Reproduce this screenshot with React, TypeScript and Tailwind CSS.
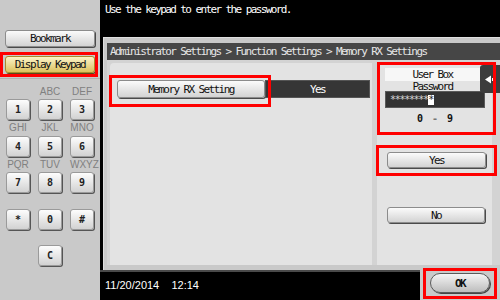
import React from "react";

const mono = "font-['DejaVu_Sans_Mono',monospace] text-[11px] tracking-[-1.6px]";

function Key({ label }: { label: string }) {
  return (
    <div className="w-[24px] h-[21px] rounded-[3px] border border-[#9a9a9a] bg-gradient-to-b from-[#fdfdfd] to-[#d2d2d2] shadow-[1px_1px_0_#555] flex items-center justify-center font-['DejaVu_Sans_Mono',monospace] font-bold text-[10px] text-[#222]">
      {label}
    </div>
  );
}

function Letters({ items, h }: { items: string[]; h: string }) {
  return (
    <div className={`flex gap-[8px] ${h} items-center`}>
      {items.map((t, i) => (
        <div key={i} className="w-[24px] text-center font-['Liberation_Sans',sans-serif] text-[10px] leading-none text-[#808080]">
          {t}
        </div>
      ))}
    </div>
  );
}

function GrayButton({ children, className = "" }: { children: React.ReactNode; className?: string }) {
  return (
    <div className={`rounded-[3px] border border-[#8c8c8c] bg-gradient-to-b from-[#fbfbfb] to-[#d3d3d3] shadow-[1px_1px_0_#4a4a4a] flex items-center justify-center text-[#111] leading-none ${mono} ${className}`}>
      {children}
    </div>
  );
}

export default function App() {
  return (
    <div className="relative w-[500px] h-[300px] flex overflow-hidden bg-black">
      {/* Left panel */}
      <div className="w-[100px] h-full bg-[#c9c9c9] flex flex-col">
        <div className="h-[79px] pt-[30px] px-[5px] border-b border-[#b2b2b2]">
          <GrayButton className="h-[17px]">Bookmark</GrayButton>
          <div className={`mt-[9px] h-[17px] rounded-[3px] border border-[#a88c2c] bg-gradient-to-b from-[#fcf4c8] to-[#dcc25c] shadow-[1px_1px_0_#5a4a1a] flex items-center justify-center text-[#111] leading-none ${mono}`}>
            Display Keypad
          </div>
        </div>
        <div className="pl-[6px] pt-[5px] flex flex-col">
          <Letters items={["", "ABC", "DEF"]} h="h-[15px]" />
          <div className="flex gap-[8px]"><Key label="1" /><Key label="2" /><Key label="3" /></div>
          <Letters items={["GHI", "JKL", "MNO"]} h="h-[16px]" />
          <div className="flex gap-[8px]"><Key label="4" /><Key label="5" /><Key label="6" /></div>
          <Letters items={["PQR", "TUV", "WXYZ"]} h="h-[15px]" />
          <div className="flex gap-[8px]"><Key label="7" /><Key label="8" /><Key label="9" /></div>
          <div className="h-[16px]" />
          <div className="flex gap-[8px]"><Key label="*" /><Key label="0" /><Key label="#" /></div>
          <div className="h-[15px]" />
          <div className="flex gap-[8px] pl-[32px]"><Key label="C" /></div>
        </div>
      </div>

      {/* Right area */}
      <div className="flex-1 flex flex-col bg-black">
        <div className={`h-[37px] pl-[5px] pt-[4px] text-white leading-[12px] ${mono}`}>
          Use the keypad to enter the password.
        </div>
        <div className="ml-[3px] h-[233px] bg-[#c9c9c9] border-t border-l border-[#dedede] pl-[3px] pt-[5px] pb-[5px] flex flex-col">
          <div className={`h-[17px] bg-[#464646] pl-[3px] flex items-center text-[#e6e6e6] leading-none ${mono}`}>
            Administrator Settings &gt; Function Settings &gt; Memory RX Settings
          </div>
          <div className="flex-1 flex bg-[#d3d3d3]">
            <div className="ml-[3px] mt-[3px] w-[262px] bg-[#e3e3e3] rounded-tl-[4px] pl-[7px] pt-[17px]">
              <div className="flex h-[18px]">
                <GrayButton className="w-[148px] h-[18px]">Memory RX Setting</GrayButton>
                <div className={`w-[105px] h-[18px] bg-[#363636] border border-[#555] flex items-center justify-center text-white leading-none ${mono}`}>
                  Yes
                </div>
              </div>
            </div>
            <div className="ml-[5px] mt-[2px] w-[115px] bg-[#e3e3e3] rounded-t-[4px] flex flex-col pl-[8px]">
              <div className={`mt-[6px] w-[95px] h-[13px] bg-[#f7f7f7] flex items-center justify-center text-[#111] leading-none ${mono}`}>
                User Box
              </div>
              <div className={`w-[95px] h-[10px] flex items-center justify-center text-[#111] leading-none ${mono}`}>
                Password
              </div>
              <div className="w-[100px] h-[17px] bg-[#333] border border-[#5a5a5a] flex items-center pl-[4px] text-[#d8d8d8] font-['DejaVu_Sans_Mono',monospace] text-[10px] tracking-[-1.3px] leading-none">
                <span>********</span>
                <span className="bg-white text-[#222] leading-[10px] px-[0.5px]">*</span>
              </div>
              <div className="mt-[6px] w-[100px] h-[10px] flex items-center justify-center gap-[9px] text-[#111] font-['DejaVu_Sans_Mono',monospace] font-bold text-[10px] leading-none">
                <span>0</span><span className="text-[#777]">-</span><span>9</span>
              </div>
              <div className="mt-[28px] ml-[2px] w-[99px]">
                <GrayButton className="h-[16px]">Yes</GrayButton>
              </div>
              <div className="mt-[39px] ml-[2px] w-[98px]">
                <GrayButton className="h-[16px]">No</GrayButton>
              </div>
            </div>
          </div>
        </div>
        <div className="flex-1 flex">
          <div className="flex-1 border-t-2 border-[#4a4a4a] bg-black pl-[5px] pt-[7px] text-white font-['Liberation_Sans',sans-serif] text-[11px] leading-[12px]">
            11/20/2014&nbsp;&nbsp;&nbsp;&nbsp;12:14
          </div>
          <div className="w-[80px] bg-[#c9c9c9] pl-[10px] pt-[3px]">
            <div className={`w-[60px] h-[20px] rounded-full border border-[#5a5a5a] bg-gradient-to-b from-[#f4f4f4] to-[#bdbdbd] shadow-[1px_1px_0_#444] flex items-center justify-center text-[#111] font-bold leading-none ${mono}`}>
              OK
            </div>
          </div>
        </div>
      </div>

      {/* Side tab */}
      <div className="absolute left-[480px] top-[65px] w-[20px] h-[28px] bg-[#3c3c3c] rounded-l-[3px] flex items-center justify-center">
        <svg width="10" height="9" viewBox="0 0 10 9">
          <polygon points="0,4.5 6,0.5 6,8.5" fill="#fff" />
          <rect x="7" y="3" width="2" height="3" fill="#fff" />
        </svg>
      </div>

      {/* Red annotation boxes */}
      <div className="absolute left-0 top-[52px] w-[98px] h-[25px] border-[3px] border-[#ff0000]" />
      <div className="absolute left-[109px] top-[75px] w-[162px] h-[32px] border-[3px] border-[#ff0000]" />
      <div className="absolute left-[377px] top-[62px] w-[119px] h-[73px] border-[3px] border-[#ff0000]" />
      <div className="absolute left-[376px] top-[145px] w-[121px] h-[31px] border-[3px] border-[#ff0000]" />
      <div className="absolute left-[423px] top-[268px] w-[74px] h-[31px] border-[3px] border-[#ff0000]" />
    </div>
  );
}
